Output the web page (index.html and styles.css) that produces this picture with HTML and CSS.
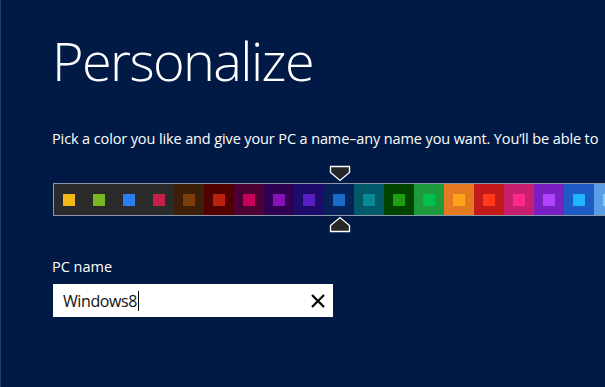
FILE: index.html
```html
<!DOCTYPE html>
<html lang="en">
<head>
<meta charset="utf-8">
<title>Personalize</title>
<link rel="stylesheet" href="styles.css">
</head>
<body>
<main class="page">
  <h1 class="title">Personalize</h1>
  <p class="intro">Pick a color you like and give your PC a name–any name you want. You’ll be able to</p>
  <div class="picker">
    <div class="strip">
      <div class="cell" style="background:#2b2b2b"><span class="sq" style="background:#f4b619"></span></div>
      <div class="cell" style="background:#2b2b2b"><span class="sq" style="background:#78b81e"></span></div>
      <div class="cell" style="background:#2b2b2b"><span class="sq" style="background:#2d7ff0"></span></div>
      <div class="cell" style="background:#2b2b2b"><span class="sq" style="background:#c4204a"></span></div>
      <div class="cell" style="background:#3b1f06"><span class="sq" style="background:#7b3f0b"></span></div>
      <div class="cell" style="background:#520000"><span class="sq" style="background:#b8220e"></span></div>
      <div class="cell" style="background:#4d0034"><span class="sq" style="background:#c8005a"></span></div>
      <div class="cell" style="background:#2f0052"><span class="sq" style="background:#8712b8"></span></div>
      <div class="cell" style="background:#1f0c6a"><span class="sq" style="background:#5b1ec2"></span></div>
      <div class="cell selected" style="background:#062258"><span class="sq" style="background:#1a6acc"></span></div>
      <div class="cell" style="background:#005a6a"><span class="sq" style="background:#0a8a94"></span></div>
      <div class="cell" style="background:#004400"><span class="sq" style="background:#1e9e10"></span></div>
      <div class="cell" style="background:#1c9a3c"><span class="sq" style="background:#00c14c"></span></div>
      <div class="cell" style="background:#e57a22"><span class="sq" style="background:#ffa31f"></span></div>
      <div class="cell" style="background:#c41a1a"><span class="sq" style="background:#ff3b1c"></span></div>
      <div class="cell" style="background:#c81e70"><span class="sq" style="background:#ff2a86"></span></div>
      <div class="cell" style="background:#7a1fc2"><span class="sq" style="background:#b143ff"></span></div>
      <div class="cell" style="background:#1f5bc4"><span class="sq" style="background:#20b4ff"></span></div>
      <div class="cell" style="background:#5a9ce8"><span class="sq" style="background:#7fd0ff"></span></div>
    </div>
    <svg class="marker marker-top" width="22" height="17" viewBox="0 0 22 17">
      <path d="M1.5 1.5 H20.5 V7.5 L11 15.5 L1.5 7.5 Z" fill="#262626" stroke="#ffffff" stroke-width="1.3"/>
    </svg>
    <svg class="marker marker-bottom" width="22" height="17" viewBox="0 0 22 17">
      <path d="M1.5 15.5 H20.5 V9.5 L11 1.5 L1.5 9.5 Z" fill="#262626" stroke="#ffffff" stroke-width="1.3"/>
    </svg>
  </div>
  <label class="label" for="pcname">PC name</label>
  <div class="field">
    <span class="value">Windows8</span><span class="caret"></span>
    <svg class="clear" width="16" height="16" viewBox="0 0 16 16">
      <path d="M2 2 L14 14 M14 2 L2 14" stroke="#000" stroke-width="2.2" fill="none"/>
    </svg>
  </div>
</main>
</body>
</html>
```
FILE: styles.css
```css
html, body {
  margin: 0;
  padding: 0;
  background: #011a45;
  overflow: hidden;
}
body {
  width: 605px;
  height: 387px;
  border-left: 1px solid #26406a;
  box-sizing: border-box;
  font-family: "Open Sans", "Noto Sans", sans-serif;
  color: #ffffff;
}
.page {
  padding: 22px 0 0 51px;
}
.title {
  margin: 0;
  font-weight: 300;
  font-size: 54px;
  line-height: 76px;
  letter-spacing: -1.6px;
}
.intro {
  margin: 31px 0 0 0;
  font-size: 14.5px;
  line-height: 20px;
  letter-spacing: -0.12px;
  white-space: nowrap;
}
.picker {
  position: relative;
  margin-top: 34px;
  height: 33px;
}
.strip {
  display: flex;
  height: 31px;
  border: 1px solid #8d97ab;
  border-right: none;
  width: 620px;
  margin-left: 1px;
}
.cell {
  flex: 0 0 30px;
  height: 31px;
  display: flex;
  align-items: center;
  justify-content: center;
}
.sq {
  width: 12px;
  height: 12px;
}
.marker {
  position: absolute;
  left: 277px;
}
.marker-top {
  top: -18px;
}
.marker-bottom {
  top: 33px;
}
.label {
  display: block;
  margin-top: 41px;
  font-size: 14.5px;
  line-height: 20px;
}
.field {
  margin-top: 7px;
  margin-left: 1px;
  width: 280px;
  height: 33px;
  background: #ffffff;
  display: flex;
  align-items: center;
  padding-left: 10px;
  box-sizing: border-box;
  color: #111;
}
.value {
  font-size: 16px;
  letter-spacing: -0.4px;
}
.caret {
  width: 1px;
  height: 20px;
  background: #000;
  margin-left: 1px;
}
.clear {
  margin-left: auto;
  margin-right: 7px;
}
```
